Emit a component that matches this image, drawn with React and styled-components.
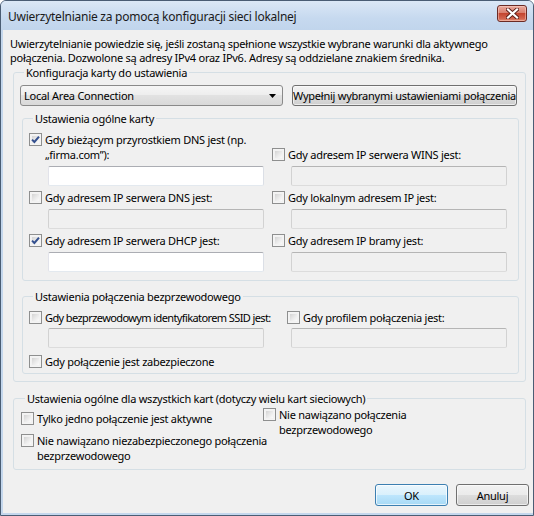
import React from 'react';
import styled, { createGlobalStyle } from 'styled-components';

const GlobalStyle = createGlobalStyle`
  html, body { margin: 0; padding: 0; background: #fff; }
  body {
    font-family: "Noto Sans", "Liberation Sans", sans-serif;
    font-size: 11px;
    letter-spacing: -0.25px;
    color: #000;
  }
  * { box-sizing: border-box; }
`;

const Window = styled.div`
  width: 534px;
  height: 516px;
  display: flex;
  flex-direction: column;
  border: 1px solid #4a5d74;
  border-radius: 6px 6px 0 0;
  background: #c4d7ed;
  overflow: hidden;
`;

const TitleBar = styled.div`
  flex: none;
  height: 29px;
  display: flex;
  align-items: center;
  padding: 0 6px 0 7px;
  background: linear-gradient(#dbe8f6, #c6d9ef 60%, #c1d5ec);
`;

const Title = styled.div`
  flex: 1;
  font-size: 12px;
  line-height: 15px;
  color: #1a1a1a;
  margin-top: 1px;
`;

const CloseButton = styled.div`
  align-self: flex-start;
  width: 30px;
  height: 17px;
  margin-top: 4px;
  border: 1px solid #6b2b25;
  border-radius: 3px;
  display: flex;
  align-items: center;
  justify-content: center;
  background: linear-gradient(#e9a99c, #d9806f 45%, #c4452f 50%, #d2654f 85%, #e38f76);
  box-shadow: inset 0 0 0 1px rgba(255, 220, 210, 0.45);
`;

const Frame = styled.div`
  flex: 1;
  min-height: 0;
  display: flex;
  padding: 0 5px 2px 2px;
`;

const Client = styled.div`
  flex: 1;
  background: #f0f0f0;
  display: flex;
  flex-direction: column;
  padding: 7px 7px 0 7px;
`;

const Intro = styled.p`
  margin: 0;
  line-height: 14px;
`;

const Group = styled.fieldset`
  margin: ${p => p.$top || 0}px 0 0 ${p => p.$left || 0}px;
  padding: ${p => p.$pad};
  border: 1px solid #d5dfe5;
  border-radius: 3px;
  min-width: 0;
`;

const Legend = styled.legend`
  padding: 0 2px;
  margin-left: 4px;
  line-height: 15px;
`;

const ComboRow = styled.div`
  display: flex;
  gap: 9px;
  margin: 5px 2px 0 0;
`;

const Combo = styled.div`
  width: 263px;
  height: 21px;
  display: flex;
  align-items: center;
  padding: 0 6px 0 3px;
  border: 1px solid #8a8a8a;
  border-radius: 3px;
  background: linear-gradient(#f6f6f6, #ededed 50%, #e2e2e2 50%, #d9d9d9);
`;

const ComboText = styled.span`
  flex: 1;
`;

const Button = styled.div`
  flex: ${p => (p.$grow ? 1 : 'none')};
  min-width: 0;
  width: ${p => (p.$grow ? 'auto' : '73px')};
  height: ${p => (p.$grow ? 21 : 22)}px;
  display: flex;
  align-items: center;
  justify-content: center;
  border: 1px solid ${p => (p.$primary ? '#3c7fb1' : '#707070')};
  border-radius: 3px;
  white-space: nowrap;
  overflow: hidden;
  background: ${p =>
    p.$primary
      ? 'linear-gradient(#eaf6fd, #d9f0fc 50%, #bee6fd 50%, #a7d9f5)'
      : 'linear-gradient(#f2f2f2, #ebebeb 50%, #dddddd 50%, #cfcfcf)'};
  box-shadow: inset 0 0 0 1px ${p => (p.$primary ? 'rgba(255,255,255,0.7)' : 'rgba(255,255,255,0.6)')};
`;

const FieldGrid = styled.div`
  display: grid;
  grid-template-columns: ${p => p.$col}px 1fr;
  row-gap: ${p => p.$rowGap || 0}px;
`;

const Cell = styled.div`
  display: flex;
  flex-direction: column;
  justify-content: flex-end;
  gap: ${p => p.$gap}px;
  grid-column: ${p => (p.$span ? '1 / span 2' : 'auto')};
`;

const StackCell = styled.div`
  display: flex;
  flex-direction: column;
  gap: 7px;
  padding-top: ${p => p.$top || 0}px;
`;

const CheckRow = styled.label`
  display: flex;
  align-items: flex-start;
  gap: 3px;
  line-height: 15px;
  margin-left: ${p => p.$shift || 0}px;
  white-space: nowrap;
  letter-spacing: ${p => (p.$tight ? '-0.6px' : 'inherit')};
`;

const Box = styled.span`
  flex: none;
  width: 13px;
  height: 13px;
  margin-top: 1px;
  border: 1px solid #8e8f8f;
  background: #f4f4f4;
  display: flex;
  align-items: center;
  justify-content: center;
  position: relative;
  &::before {
    content: '';
    position: absolute;
    inset: 1px;
    background: linear-gradient(135deg, #d4d4d4, #ebebeb 55%, #fbfbfb);
    border: 1px solid #f2f2f2;
  }
  svg { position: relative; }
`;

const TextBox = styled.div`
  width: 216px;
  height: 20px;
  margin-left: 19px;
  border: 1px solid;
  border-radius: 2px;
  border-color: ${p => (p.$disabled ? '#b5b5b5 #d2d2d2 #dcdcdc #d2d2d2' : '#abadb3 #dbdfe6 #e3e9ef #e2e3ea')};
  background: ${p => (p.$disabled ? '#f0f0f0' : '#fff')};
`;

const Footer = styled.div`
  display: flex;
  justify-content: flex-end;
  gap: 8px;
  margin: 14px -3px 0 0;
`;

const Arrow = () => (
  <svg width="7" height="4" viewBox="0 0 7 4">
    <path d="M0 0h7L3.5 4z" fill="#000" />
  </svg>
);

const CloseGlyph = () => (
  <svg width="13" height="11" viewBox="0 0 13 11">
    <path d="M2 1.5l9 8M11 1.5l-9 8" stroke="#5a1e18" strokeWidth="4" strokeLinecap="square" />
    <path d="M2 1.5l9 8M11 1.5l-9 8" stroke="#fff" strokeWidth="2.2" strokeLinecap="square" />
  </svg>
);

function Check({ checked, children, shift, tight }) {
  return (
    <CheckRow $shift={shift} $tight={tight}>
      <Box>
        {checked && (
          <svg width="9" height="9" viewBox="0 0 9 9">
            <path d="M1 4.6L3.4 7L8 1.6" stroke="#34508f" strokeWidth="2" fill="none" />
          </svg>
        )}
      </Box>
      <span>{children}</span>
    </CheckRow>
  );
}

function Field({ label, checked, disabled, shift, tight, gap = 4 }) {
  return (
    <Cell $gap={gap}>
      <Check checked={checked} shift={shift} tight={tight}>{label}</Check>
      <TextBox $disabled={disabled} />
    </Cell>
  );
}

export default function App() {
  return (
    <>
      <GlobalStyle />
      <Window>
        <TitleBar>
          <Title>Uwierzytelnianie za pomocą konfiguracji sieci lokalnej</Title>
          <CloseButton><CloseGlyph /></CloseButton>
        </TitleBar>
        <Frame>
          <Client>
            <Intro>
              Uwierzytelnianie powiedzie się, jeśli zostaną spełnione wszystkie wybrane warunki dla aktywnego<br />
              połączenia. Dozwolone są adresy IPv4 oraz IPv6. Adresy są oddzielane znakiem średnika.
            </Intro>

            <Group $left={3} $pad="0 6px 7px 6px">
              <Legend>Konfiguracja karty do ustawienia</Legend>
              <ComboRow>
                <Combo>
                  <ComboText>Local Area Connection</ComboText>
                  <Arrow />
                </Combo>
                <Button $grow>Wypełnij wybranymi ustawieniami połączenia</Button>
              </ComboRow>

              <Group $top={5} $left={2} $pad="6px 6px 8px 6px">
                <Legend>Ustawienia ogólne karty</Legend>
                <FieldGrid $col={243} $rowGap={4}>
                  <Field checked label={<>Gdy bieżącym przyrostkiem DNS jest (np.<br />„firma.com”):</>} />
                  <Field disabled label="Gdy adresem IP serwera WINS jest:" />
                  <Field disabled label="Gdy adresem IP serwera DNS jest:" />
                  <Field disabled label="Gdy lokalnym adresem IP jest:" />
                  <Field checked label="Gdy adresem IP serwera DHCP jest:" />
                  <Field disabled label="Gdy adresem IP bramy jest:" />
                </FieldGrid>
              </Group>

              <Group $top={8} $left={2} $pad="6px 6px 4px 6px">
                <Legend>Ustawienia połączenia bezprzewodowego</Legend>
                <FieldGrid $col={243} $rowGap={6}>
                  <Field disabled tight gap={3} label="Gdy bezprzewodowym identyfikatorem SSID jest:" />
                  <Field disabled shift={15} gap={3} label="Gdy profilem połączenia jest:" />
                  <Cell $span $gap={0}>
                    <Check>Gdy połączenie jest zabezpieczone</Check>
                  </Cell>
                </FieldGrid>
              </Group>
            </Group>

            <Group $top={9} $left={3} $pad="1px 7px 6px 7px">
              <Legend>Ustawienia ogólne dla wszystkich kart (dotyczy wielu kart sieciowych)</Legend>
              <FieldGrid $col={242}>
                <StackCell $top={4}>
                  <Check>Tylko jedno połączenie jest aktywne</Check>
                  <Check>Nie nawiązano niezabezpieczonego połączenia<br />bezprzewodowego</Check>
                </StackCell>
                <StackCell>
                  <Check>Nie nawiązano połączenia<br />bezprzewodowego</Check>
                </StackCell>
              </FieldGrid>
            </Group>

            <Footer>
              <Button $primary>OK</Button>
              <Button>Anuluj</Button>
            </Footer>
          </Client>
        </Frame>
      </Window>
    </>
  );
}
